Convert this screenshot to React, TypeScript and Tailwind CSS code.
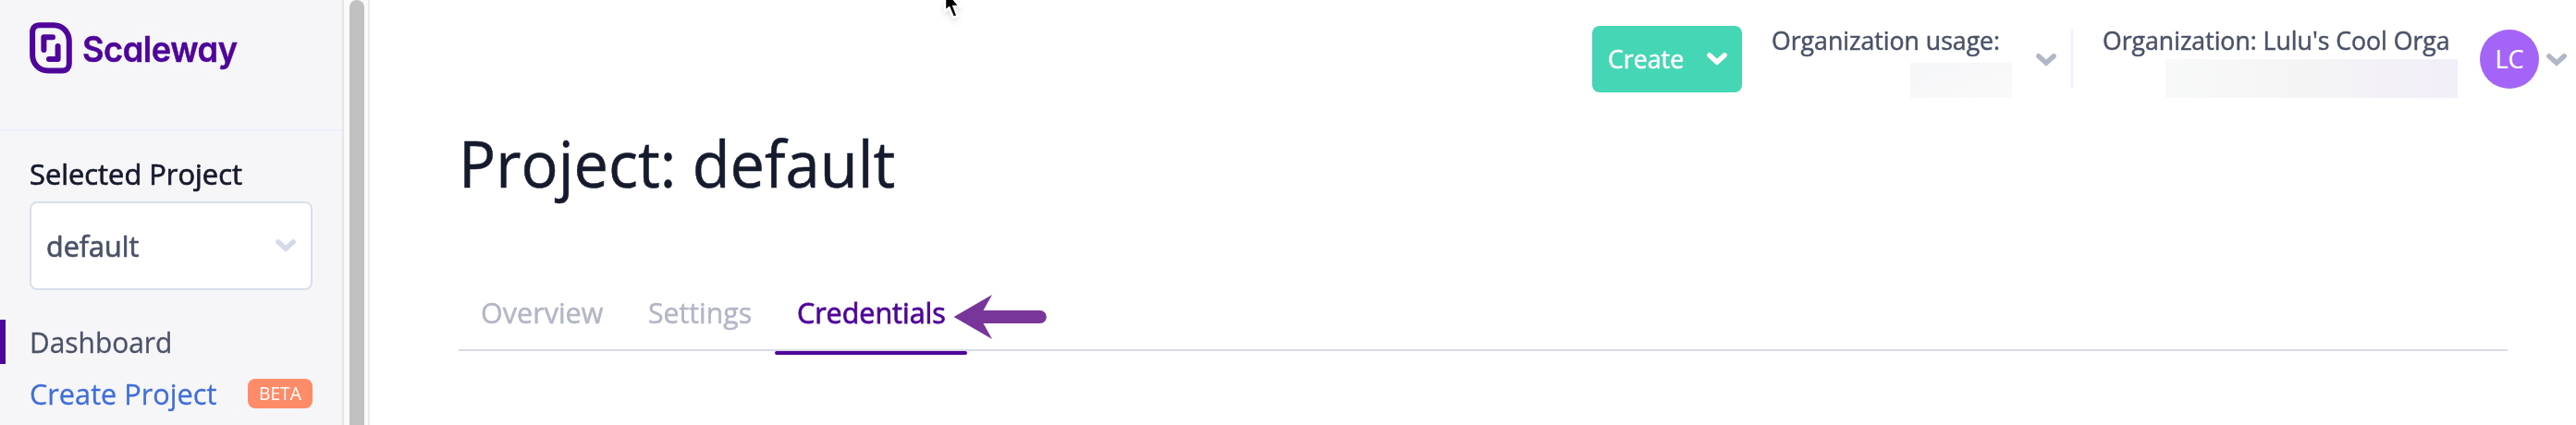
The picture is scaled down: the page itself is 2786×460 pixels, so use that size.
import React from 'react';

const Chevron = ({ className }: { className: string }) => (
  <svg viewBox="0 0 22 14" className={`h-[14px] w-[22px] shrink-0 ${className}`} fill="none" stroke="currentColor" strokeWidth="5.4" strokeLinecap="round" strokeLinejoin="miter">
    <path d="M2.8 2.8 L11 10.2 L19.2 2.8" />
  </svg>
);

const Text = ({ className, children }: { className: string; children: React.ReactNode }) => (
  <span className={`inline-block origin-left whitespace-nowrap ${className}`}>{children}</span>
);

const Logo = () => (
  <div className="flex h-[56px] items-center">
    <svg viewBox="0 0 46 56" className="h-[56px] w-[46px] shrink-0" fill="none" stroke="#4f0599" strokeLinecap="round">
      <path strokeWidth="6" d="M11 3.3H26C36 3.3 42.8 11 42.8 21V45C42.8 49.5 40 52.5 35.5 52.5H20C10 52.5 3.1 45 3.1 35V11C3.1 6 6 3.3 11 3.3Z" />
      <path strokeWidth="6" strokeLinejoin="round" d="M15.4 30V16.3H25" />
      <path strokeWidth="6" strokeLinejoin="round" d="M30.6 26V40H21" />
    </svg>
    <Text className="mt-[2px] ml-[11px] scale-x-[0.94] font-['Inter'] text-[38.5px] leading-[56px] font-semibold tracking-[-0.5px] text-[#4f0599] [-webkit-text-stroke:0.5px] [font-feature-settings:'cv11']">Scaleway</Text>
  </div>
);

export default function App() {
  return (
    <div className="flex h-[460px] w-[2786px] overflow-hidden bg-white font-['Open_Sans',sans-serif] text-[#4a5268]">
      <aside className="w-[372px] shrink-0 border-r-2 border-[#e6e6e6] bg-[#f6f6f9]">
        <div className="h-[142px] border-b-2 border-[#ebefff] pt-[24px] pl-[32px]">
          <Logo />
        </div>
        <div className="px-[32px] pt-[26px]">
          <div className="h-[50px] text-[31px] leading-[40px] text-[#151a2d]">
            <Text className="scale-x-[0.995] [-webkit-text-stroke:0.7px]">Selected Project</Text>
          </div>
          <div className="flex h-[96px] items-center justify-between rounded-lg border-2 border-[#d9deeb] bg-white px-[16px] text-[31px]">
            <Text className="scale-x-[0.985] [-webkit-text-stroke:0.7px]">default</Text>
            <Chevron className="text-[#d4dae7]" />
          </div>
        </div>
        <nav className="pt-[32px] text-[31px]">
          <div className="flex h-[48px] items-center border-l-[6px] border-[#4f0599] pl-[26px]">
            <Text className="scale-x-[0.965] [-webkit-text-stroke:0.3px]">Dashboard</Text>
          </div>
          <div className="mt-2 flex h-[48px] items-center justify-between px-[32px] text-[#3f6ed8]">
            <Text className="scale-x-[0.99] [-webkit-text-stroke:0.3px]">Create Project</Text>
            <span className="flex h-[32px] w-[70px] items-center rounded-lg bg-[#ff8c69] pl-[12px] text-[20px] text-white">
              <Text className="scale-x-[0.96]">BETA</Text>
            </span>
          </div>
        </nav>
      </aside>
      <div className="w-[28px] shrink-0 border-r-2 border-[#ebebeb] bg-[#fafafa] pl-[6px]">
        <div className="h-[480px] w-[16px] rounded-t-full bg-[#c1c1c1]" />
      </div>
      <main className="relative flex-1">
        <svg viewBox="0 0 24 26" className="absolute top-0 left-[618px] h-[26px] w-[24px] drop-shadow-md">
          <path d="M4 -12V12L8.5 8.5L13 19L17.5 17L13.500 7H20Z" fill="#000" stroke="#fff" strokeWidth="2.4" />
        </svg>
        <header className="flex h-[128px] items-start justify-end pr-[10px] text-[27px] leading-[32px] [-webkit-text-stroke:0.5px]">
          <button className="mt-[28px] mr-[32px] flex h-[72px] w-[162px] items-center justify-between rounded-lg bg-[#45d6b5] pr-[16px] pl-[17px] text-white">
            <Text className="scale-x-[0.99]">Create</Text>
            <Chevron className="text-white" />
          </button>
          <div className="mt-[28px] flex w-[260px] flex-col">
            <Text className="scale-x-[0.987]">Organization usage:</Text>
            <span className="mt-[8px] h-[38px] w-[110px] self-end bg-gradient-to-br from-[#f5f6f8] to-[#fafafa]" />
          </div>
          <Chevron className="mt-[58px] ml-[26px] text-[#b2b6c6]" />
          <div className="mt-[32px] ml-[16px] h-[64px] w-[2px] bg-[#ecefff]" />
          <div className="mt-[28px] ml-[32px] flex w-[384px] flex-col">
            <Text className="scale-x-[0.986]">Organization: Lulu's Cool Orga</Text>
            <span className="mt-[4px] h-[42px] w-[316px] self-end bg-gradient-to-r from-[#f8f9f9] via-[#f4f4f5] to-[#f2eef9]" />
          </div>
          <div className="mt-[32px] ml-[24px] flex h-[64px] w-[64px] items-center justify-center rounded-full bg-[#a464f8] text-white [-webkit-text-stroke:0.2px]">LC</div>
          <Chevron className="mt-[58px] ml-[8px] text-[#b2b6c6]" />
        </header>
        <h1 className="mt-[8px] ml-[96px] h-[80px] text-[69px] leading-[80px] text-[#151a2d]">
          <Text className="scale-x-[0.968] [-webkit-text-stroke:0.5px]">Project: default</Text>
        </h1>
        <div className="mt-[82px] ml-[96px] flex h-[82px] w-[2216px] border-b-2 border-[#d8d9e9] pl-[24px] text-[31px] leading-[80px] text-[#b2b6c6]">
          <div className="w-[181px]">
            <Text className="scale-x-[0.985] [-webkit-text-stroke:0.5px]">Overview</Text>
          </div>
          <div className="w-[141px]">
            <Text className="scale-x-[0.975] [-webkit-text-stroke:0.5px]">Settings</Text>
          </div>
          <div className="relative -ml-[4px] h-[86px] w-[208px] pl-[24px] text-[#4f0599]">
            <Text className="scale-x-[0.982] [-webkit-text-stroke:0.8px]">Credentials</Text>
            <span className="absolute bottom-0 left-0 h-[4px] w-[208px] rounded-sm bg-[#4f0599]" />
            <svg viewBox="0 0 101 48" className="absolute top-[21px] left-[193px] h-[48px] w-[101px]" fill="#78369a">
              <path d="M0.500 24L42 0L32.500 17H94A6.800 7 0 0 1 94 31H32.500L42 48Z" />
            </svg>
          </div>
        </div>
      </main>
    </div>
  );
}
